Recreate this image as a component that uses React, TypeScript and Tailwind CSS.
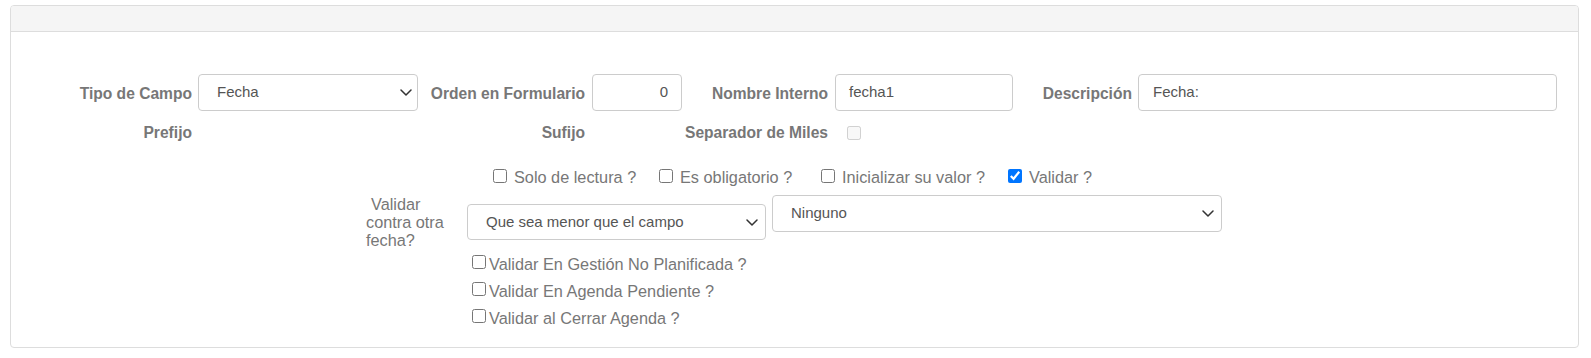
import React from "react";

const Chevron = () => (
  <svg width="12" height="7" viewBox="0 0 12 7" fill="none">
    <path d="M1 1l5 5 5-5" stroke="#333" strokeWidth="1.5" strokeLinecap="round" strokeLinejoin="round" />
  </svg>
);

function FakeSelect({ value, className, pr }: { value: string; className: string; pr: string }) {
  return (
    <div
      className={`flex items-center justify-between border border-[#ccc] rounded-[4px] bg-white pl-[18px] ${pr} text-[15px] text-[#555] ${className}`}
    >
      <span>{value}</span>
      <Chevron />
    </div>
  );
}

function Cb({ checked, disabled, className = "" }: { checked?: boolean; disabled?: boolean; className?: string }) {
  return (
    <input
      type="checkbox"
      defaultChecked={checked}
      disabled={disabled}
      className={`m-0 size-[14px] shrink-0 ${className}`}
    />
  );
}

export default function App() {
  const label = "font-bold text-[15.6px] text-[#777] text-right leading-[20px]";
  return (
    <div className="bg-white w-[1591px] h-[358px] pt-[5px] pl-[10px] pr-[12px] font-['Liberation_Sans',Arial,sans-serif]">
      <div className="border border-[#ddd] rounded-[4px] overflow-hidden">
        <div className="h-[26px] bg-[#f5f5f5] border-b border-[#ddd]" />
        <div className="pt-[42px] pb-[15px]">
          {/* Row 1 */}
          <div className="flex h-[37px] items-start">
            <div className={`${label} w-[187px] pr-[6px] pt-[10px] shrink-0`}>Tipo de Campo</div>
            <FakeSelect value="Fecha" className="w-[220px] h-[37px] shrink-0" pr="pr-[5px]" />
            <div className={`${label} w-[174px] pr-[7px] pt-[10px] shrink-0`}>Orden en Formulario</div>
            <div className="w-[90px] h-[37px] shrink-0 border border-[#ccc] rounded-[4px] flex items-center justify-end pr-[13px] text-[15px] text-[#555]">
              0
            </div>
            <div className={`${label} w-[153px] pr-[7px] pt-[10px] shrink-0`}>Nombre Interno</div>
            <div className="w-[178px] h-[37px] shrink-0 border border-[#ccc] rounded-[4px] flex items-center pl-[13px] text-[15px] text-[#555]">
              fecha1
            </div>
            <div className={`${label} w-[125px] pr-[6px] pt-[10px] shrink-0`}>Descripción</div>
            <div className="w-[419px] h-[37px] shrink-0 border border-[#ccc] rounded-[4px] flex items-center pl-[14px] text-[15px] text-[#555]">
              Fecha:
            </div>
          </div>

          {/* Row 2 */}
          <div className="flex h-[20px] mt-[12px] items-start">
            <div className={`${label} w-[187px] pr-[6px] shrink-0`}>Prefijo</div>
            <div className="w-[220px] shrink-0" />
            <div className={`${label} w-[174px] pr-[7px] shrink-0`}>Sufijo</div>
            <div className="w-[90px] shrink-0" />
            <div className={`${label} w-[153px] pr-[7px] shrink-0`}>Separador de Miles</div>
            <div className="w-[178px] shrink-0 pl-[12px]">
              <Cb disabled />
            </div>
          </div>

          {/* Row 3 */}
          <div className="flex h-[20px] mt-[24px] items-start pl-[482px] text-[16.3px] leading-[20px] text-[#777]">
            <div className="flex items-start w-[166px] shrink-0">
              <Cb className="mt-[2px]" />
              <span className="ml-[7px]">Solo de lectura ?</span>
            </div>
            <div className="flex items-start w-[162px] shrink-0">
              <Cb className="mt-[2px]" />
              <span className="ml-[7px]">Es obligatorio ?</span>
            </div>
            <div className="flex items-start w-[187px] shrink-0">
              <Cb className="mt-[2px]" />
              <span className="ml-[7px]">Inicializar su valor ?</span>
            </div>
            <div className="flex items-start shrink-0">
              <Cb checked className="mt-[2px]" />
              <span className="ml-[7px]">Validar ?</span>
            </div>
          </div>

          {/* Row 4 + 5 */}
          <div className="pl-[355px] mt-[8px]">
            <div className="flex items-start">
              <div className="w-[101px] pr-[9px] shrink-0 text-[16.3px] leading-[18px] text-[#777] indent-[5px]">
                Validar contra otra fecha?
              </div>
              <FakeSelect value="Que sea menor que el campo" className="w-[299px] h-[36px] mt-[9px] shrink-0" pr="pr-[7px]" />
              <FakeSelect value="Ninguno" className="w-[450px] h-[37px] ml-[6px] shrink-0" pr="pr-[7px]" />
            </div>
            <div className="mt-[2px] pl-[106px] text-[16.3px] leading-[27px] text-[#777]">
              {["Validar En Gestión No Planificada ?", "Validar En Agenda Pendiente ?", "Validar al Cerrar Agenda ?"].map((t) => (
                <div key={t} className="flex items-start h-[27px]">
                  <Cb className="mt-[4px]" />
                  <span className="ml-[3px]">{t}</span>
                </div>
              ))}
            </div>
          </div>
        </div>
      </div>
    </div>
  );
}
